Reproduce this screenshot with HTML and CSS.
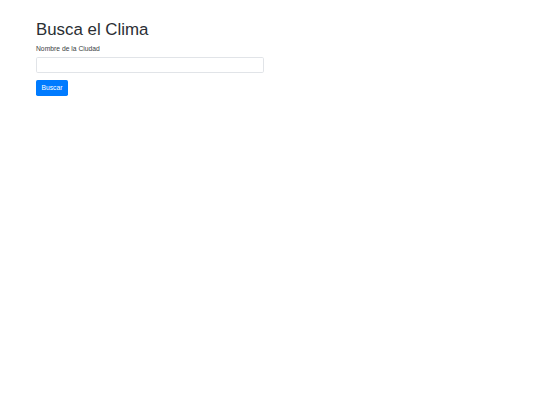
FILE: index.html
```html
<!DOCTYPE html>
<html lang="es">
<head>
  <meta charset="UTF-8">
  <meta name="viewport" content="width=device-width, initial-scale=1.0">
  <title>Busca el Clima</title>
  <link rel="stylesheet" href="styles.css">
</head>
<body>
  <div class="container">
    <h1>Busca el Clima</h1>
    <form class="weather-form">
      <div class="form-group">
        <label for="city">Nombre de la Ciudad</label>
        <input type="text" id="city" class="form-control">
      </div>
      <button type="submit" class="btn-primary">Buscar</button>
    </form>
  </div>
</body>
</html>
```

FILE: styles.css
```css
body {
  margin: 0;
  font-family: "Liberation Sans", Arial, sans-serif;
  font-size: 6.75px;
  line-height: 1.5;
  color: #212529;
  background: #fff;
}

.container {
  padding: 20.25px 36px 0;
}

h1 {
  font-size: 16.875px;
  font-weight: 400;
  line-height: 1.2;
  margin: 0 0 3.375px;
  color: #2a2e33;
}

.weather-form {
  width: 228px;
}

.form-group {
  margin-bottom: 6.75px;
}

label {
  display: block;
  margin-bottom: 3.375px;
  line-height: 10.125px;
  color: #3a3e42;
}

.form-control {
  display: block;
  box-sizing: border-box;
  width: 100%;
  height: 16px;
  padding: 0 5px;
  border: 1px solid #e1e4e8;
  border-radius: 1.7px;
  font-size: 6.75px;
  background: #fff;
}

.btn-primary {
  display: block;
  box-sizing: border-box;
  height: 16px;
  padding: 0 5.4px;
  border: none;
  border-radius: 1.7px;
  background: #007bff;
  color: #fff;
  font-family: inherit;
  font-size: 6.75px;
  line-height: 16px;
}
```
